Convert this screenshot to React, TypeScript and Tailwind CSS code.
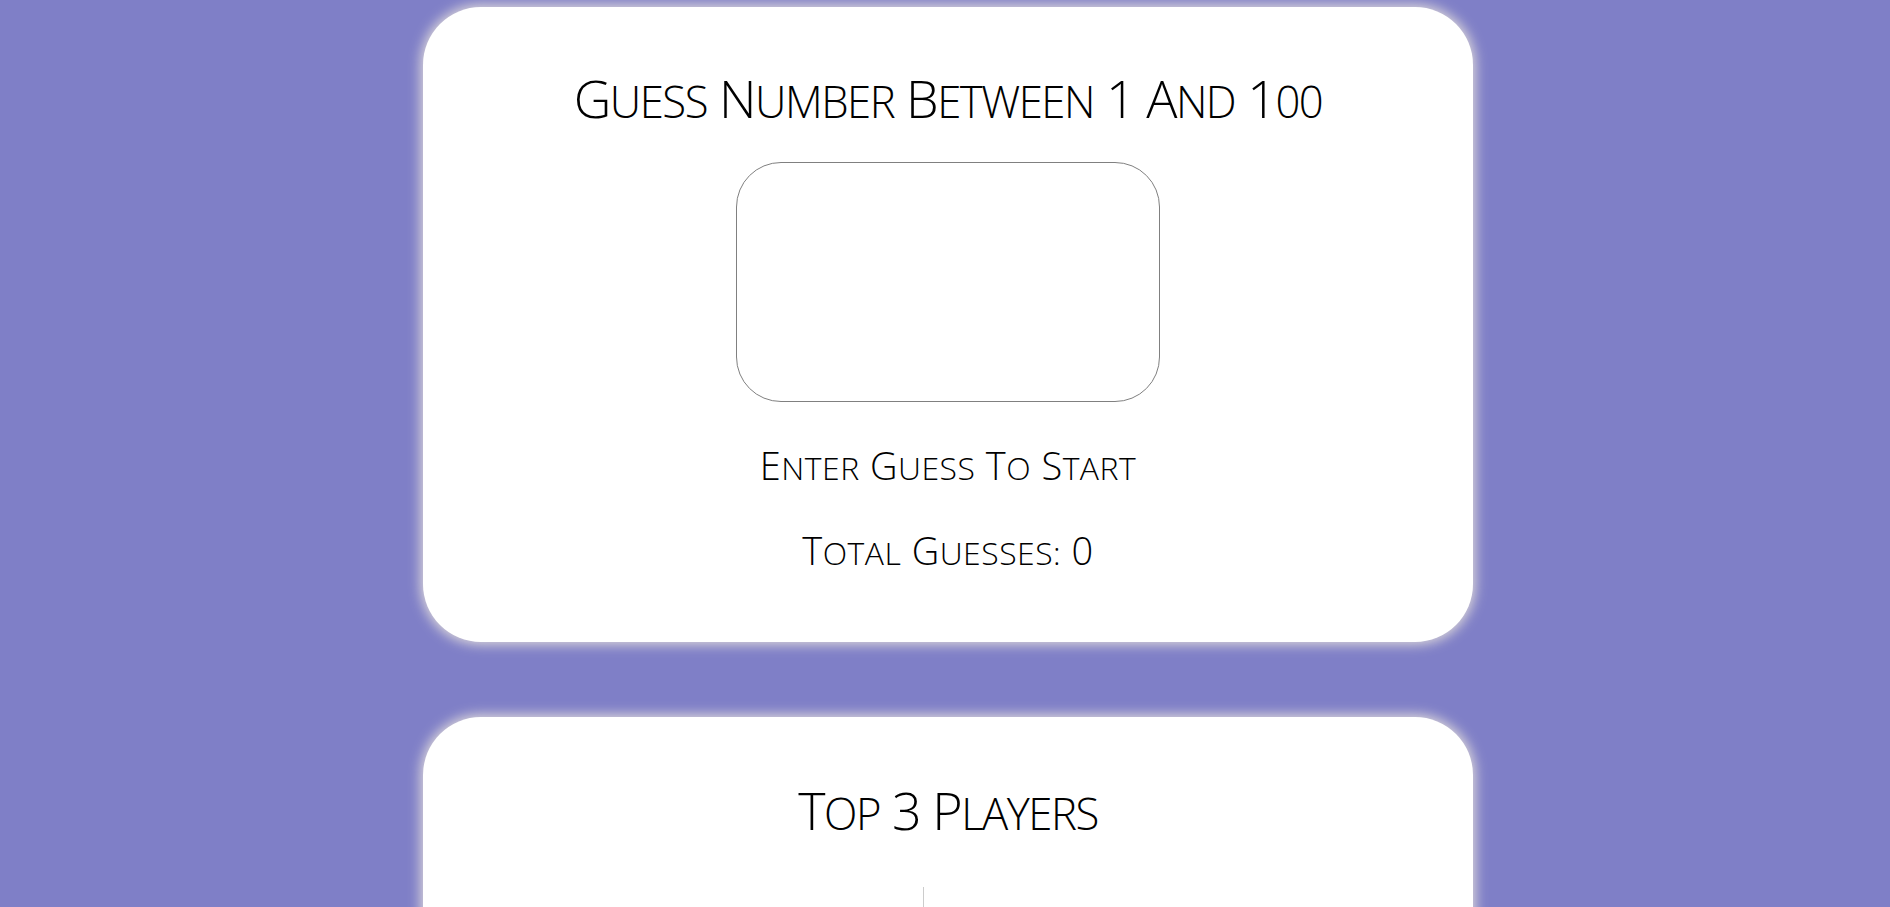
const font = { fontFamily: '"Open Sans", "Liberation Sans", sans-serif' };

// first letter of each word full size, rest as upright small capitals
const SmallCaps = ({ text }: { text: string }) => (
  <>
    {text.split(' ').map((word, i) => (
      <span key={i}>
        {i > 0 && ' '}
        {word.charAt(0).toUpperCase()}
        <span className="text-[0.84em]">{word.slice(1).toUpperCase()}</span>
      </span>
    ))}
  </>
);

const Card = ({ children }: { children: React.ReactNode }) => (
  <div className="w-[1050px] rounded-[58px] bg-white shadow-[0_0_12px_3px_#d8d3d8] flex flex-col items-center">
    {children}
  </div>
);

export default function App() {
  return (
    <div className="min-h-screen bg-[#7f7fc7] pt-[7px] pl-[6px] flex flex-col items-center gap-[75px] pb-20 text-black" style={font}>
      <Card>
        <h1 className="mt-[60px] text-[52px] font-light leading-[1.2] tracking-[-1.5px]">
          <SmallCaps text="Guess Number Between 1 And 100" />
        </h1>
        <input
          type="text"
          className="mt-[33px] w-[424px] h-[240px] rounded-[45px] border border-[#808080] outline-none text-center text-5xl"
        />
        <p className="mt-[41px] text-[38px] font-light leading-[1.2] tracking-[0.5px]">
          <SmallCaps text="Enter Guess To Start" />
        </p>
        <p className="mt-[39px] mb-[68px] text-[38px] font-light leading-[1.2] tracking-[0.5px]">
          <SmallCaps text="Total Guesses: 0" />
        </p>
      </Card>
      <Card>
        <h2 className="mt-[62px] text-[52px] font-light leading-[1.2] tracking-[-1.5px]">
          <SmallCaps text="Top 3 Players" />
        </h2>
        <table className="mt-[46px] mb-[64px] text-[30px] font-light">
          <tbody>
            <tr>
              <td className="w-[175px] h-[60px]"></td>
              <td className="w-[225px] h-[60px] border-l border-[#cccccc]"></td>
            </tr>
            <tr>
              <td className="h-[60px]"></td>
              <td className="h-[60px] border-l border-[#cccccc]"></td>
            </tr>
          </tbody>
        </table>
      </Card>
    </div>
  );
}
